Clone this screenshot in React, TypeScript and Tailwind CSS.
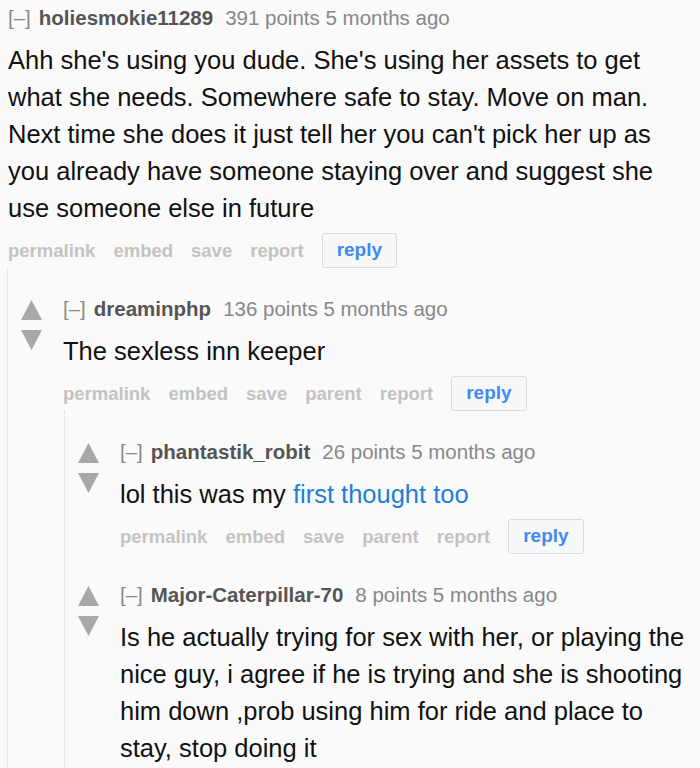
import React from "react";

type Node = {
  author: string;
  points: string;
  body: React.ReactNode;
  parent?: boolean;
  hideActions?: boolean;
  children?: Node[];
};

const thread: Node = {
  author: "holiesmokie11289",
  points: "391 points",
  body: (
    <>
      Ahh she's using you dude. She's using her assets to get what she needs.
      Somewhere safe to stay. Move on man. Next time she does it just tell her
      you can't pick her up as you already have someone staying over and
      suggest she use someone else in future
    </>
  ),
  children: [
    {
      author: "dreaminphp",
      points: "136 points",
      body: "The sexless inn keeper",
      parent: true,
      children: [
        {
          author: "phantastik_robit",
          points: "26 points",
          parent: true,
          body: (
            <>
              lol this was my{" "}
              <a href="#" className="text-[#1f7fd6]">
                first thought too
              </a>
            </>
          ),
        },
        {
          author: "Major-Caterpillar-70",
          points: "8 points",
          parent: true,
          // actions row falls below the fold
          hideActions: true,
          body: "Is he actually trying for sex with her, or playing the nice guy, i agree if he is trying and she is shooting him down ,prob using him for ride and place to stay, stop doing it",
        },
      ],
    },
  ],
};

const Arrows = () => (
  <div className="flex w-[42px] shrink-0 flex-col gap-[10px] pt-[3px]">
    <svg width="21" height="20" viewBox="0 0 21 20">
      <polygon points="10.5,0 21,20 0,20" fill="#a8a8a8" />
    </svg>
    <svg width="21" height="20" viewBox="0 0 21 20">
      <polygon points="0,0 21,0 10.5,20" fill="#a8a8a8" />
    </svg>
  </div>
);

const Buttons = ({ parent }: { parent?: boolean }) => {
  const items = ["permalink", "embed", "save", ...(parent ? ["parent"] : []), "report"];
  return (
    <div className="mt-[6px] flex items-center gap-[18px] text-[18.5px] font-bold text-[#c3c3c3]">
      {items.map((t) => (
        <span key={t}>{t}</span>
      ))}
      <button className="h-[35px] rounded-[3px] border border-[#dcdcdc] bg-[#f7f8fa] px-[14px] text-[19px] text-[#4189f2]">
        reply
      </button>
    </div>
  );
};

const Comment = ({ node, depth }: { node: Node; depth: number }) => {
  const content = (
    <div className="min-w-0 flex-1">
      <div className="flex items-center text-[20.5px] leading-[24px] text-[#888]">
        <span>[–]</span>
        <span className="ml-[8px] font-bold text-[#555]">{node.author}</span>
        <span className="ml-[12px]">{node.points} 5 months ago</span>
      </div>
      <p className="mt-[12px] text-[25.5px] leading-[37px] text-[#111]">{node.body}</p>
      {!node.hideActions && <Buttons parent={node.parent} />}
      {node.children && (
        <div
          className={
            depth === 0
              ? "ml-[-1px] border-l border-dotted border-[#d4d4d4] pl-[13px]"
              : "ml-[1px] border-l border-dotted border-[#d4d4d4] pl-[13px]"
          }
        >
          {node.children.map((c) => (
            <Comment key={c.author} node={c} depth={depth + 1} />
          ))}
        </div>
      )}
    </div>
  );
  if (depth === 0) return content;
  return (
    <div className="flex pt-[29px]">
      <Arrows />
      {content}
    </div>
  );
};

export default function App() {
  return (
    <div
      className="h-[768px] overflow-hidden bg-[#fafafa] px-2 pt-[6px]"
      style={{ fontFamily: '"Liberation Sans", Arial, sans-serif' }}
    >
      <Comment node={thread} depth={0} />
    </div>
  );
}
